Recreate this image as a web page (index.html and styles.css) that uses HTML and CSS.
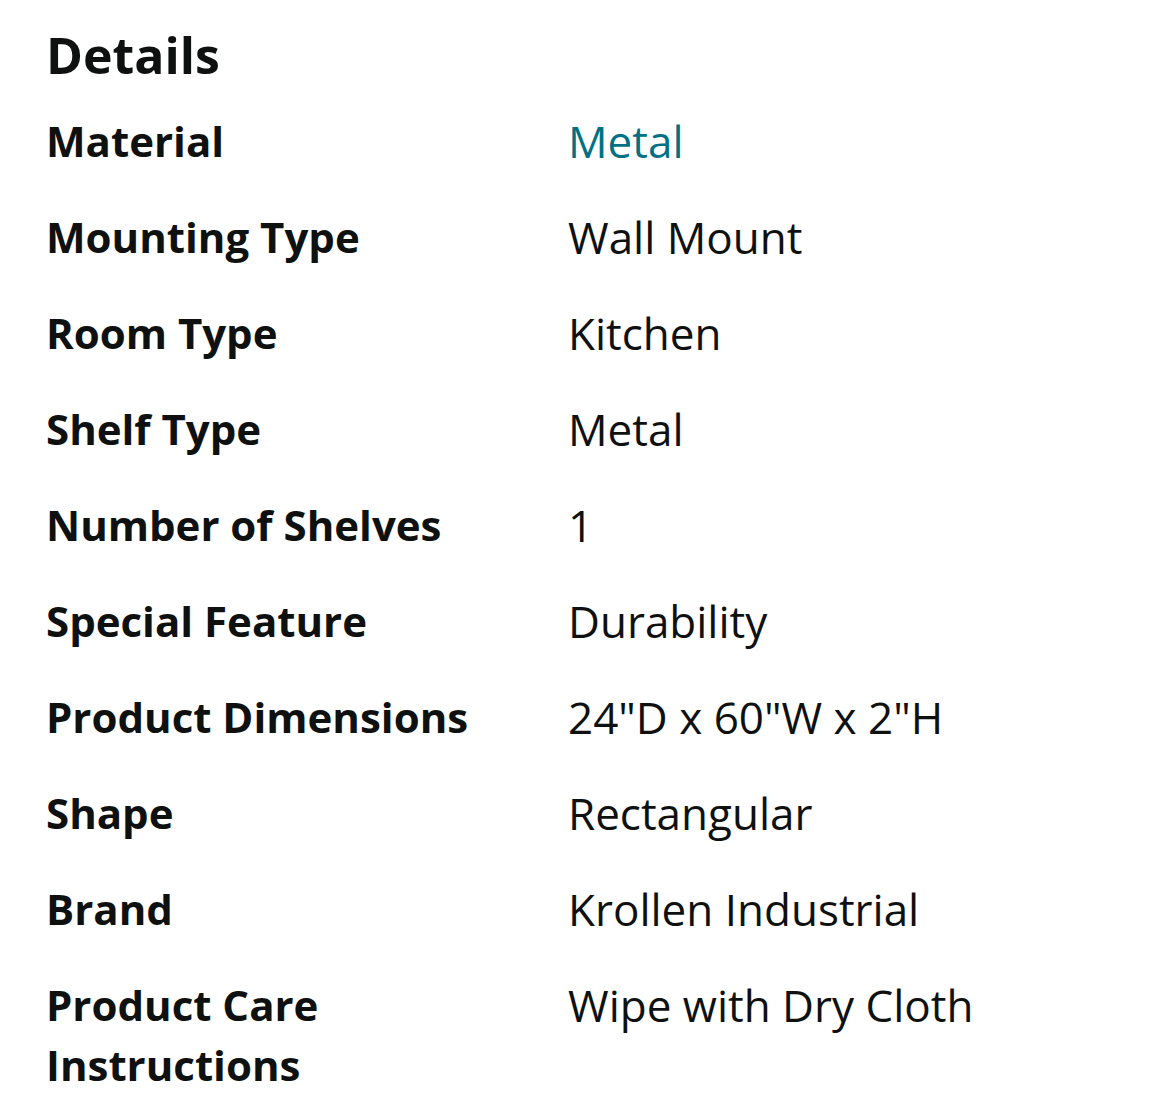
FILE: index.html
```html
<!DOCTYPE html>
<html lang="en">
<head>
<meta charset="utf-8">
<title>Details</title>
<link rel="stylesheet" href="styles.css">
</head>
<body>
<section class="details">
  <h2 class="details-title">Details</h2>
  <div class="details-table">
    <div class="label">Material</div><div class="value"><a class="link" href="#">Metal</a></div>
    <div class="label">Mounting Type</div><div class="value">Wall Mount</div>
    <div class="label">Room Type</div><div class="value">Kitchen</div>
    <div class="label">Shelf Type</div><div class="value">Metal</div>
    <div class="label">Number of Shelves</div><div class="value">1</div>
    <div class="label">Special Feature</div><div class="value">Durability</div>
    <div class="label">Product Dimensions</div><div class="value">24"D x 60"W x 2"H</div>
    <div class="label">Shape</div><div class="value">Rectangular</div>
    <div class="label">Brand</div><div class="value">Krollen Industrial</div>
    <div class="label">Product Care Instructions</div><div class="value">Wipe with Dry Cloth</div>
  </div>
</section>
</body>
</html>
```
FILE: styles.css
```css
html, body {
  margin: 0;
  padding: 0;
  background: #ffffff;
}
body {
  font-family: "Open Sans", "Noto Sans", "Liberation Sans", sans-serif;
  color: #0F1111;
}
.details {
  padding: 25px 0 0 46px;
}
.details-title {
  margin: 0 0 26px 0;
  font-size: 50px;
  line-height: 60px;
  font-weight: 700;
}
.details-table {
  display: grid;
  grid-template-columns: 522px 1fr;
  row-gap: 36px;
  line-height: 60px;
}
.label {
  font-size: 42px;
  font-weight: 700;
  padding-right: 40px;
}
.value {
  font-size: 44px;
  font-weight: 400;
}
.link {
  color: #007185;
  text-decoration: none;
}
```
